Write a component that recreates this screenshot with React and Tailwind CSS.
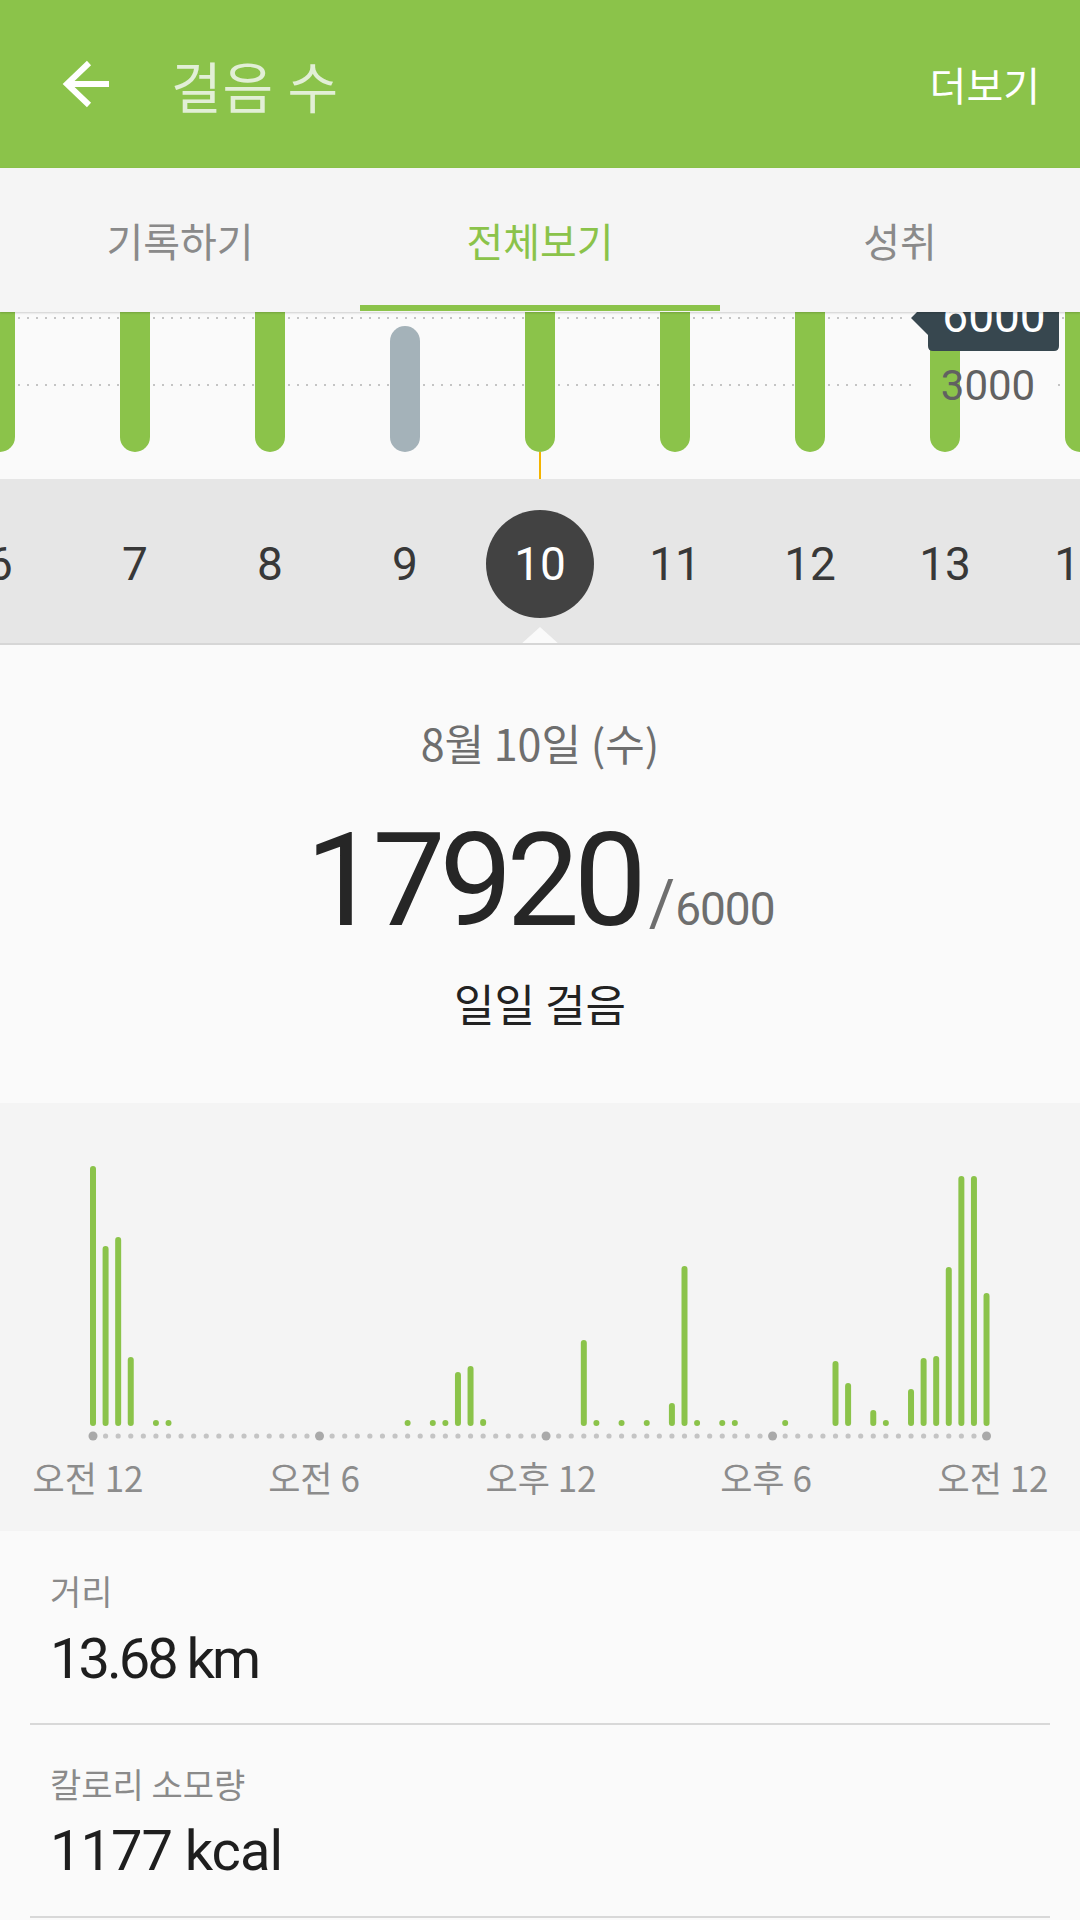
import React from "react";

const KR = "font-['Noto_Sans_CJK_KR','Noto_Sans',sans-serif]";
const NUM = "font-['Roboto','Noto_Sans_CJK_KR',sans-serif]";

const hourly = {
  0: 260, 1: 180, 2: 189, 3: 69, 5: 6, 6: 6, 25: 6, 27: 6, 28: 6, 29: 54, 30: 60, 31: 7,
  39: 86, 40: 6, 42: 6, 44: 6, 46: 23, 47: 160, 48: 6, 50: 6, 51: 6, 55: 6, 59: 65, 60: 43,
  62: 16, 63: 6, 65: 37, 66: 68, 67: 70, 68: 159, 69: 250, 70: 250, 71: 133,
};

function WeekChart() {
  const centers = [0, 135, 270, 405, 540, 675, 810, 945, 1080];
  return (
    <svg width="1080" height="167" viewBox="0 0 1080 167" className="block">
      <line x1="0" y1="6" x2="908" y2="6" stroke="#c4c4c4" strokeWidth="2" strokeDasharray="2 7" />
      <line x1="1062" y1="6" x2="1080" y2="6" stroke="#c4c4c4" strokeWidth="2" strokeDasharray="2 7" />
      <line x1="0" y1="73" x2="918" y2="73" stroke="#c4c4c4" strokeWidth="2" strokeDasharray="2 7" />
      <line x1="1058" y1="73" x2="1080" y2="73" stroke="#c4c4c4" strokeWidth="2" strokeDasharray="2 7" />
      {centers.map((c) =>
        c === 405 ? (
          <rect key={c} x={c - 15} y="14" width="30" height="126" rx="15" fill="#a4b2b9" />
        ) : (
          <rect key={c} x={c - 15} y="-30" width="30" height="170" rx="15" fill="#8bc34a" />
        )
      )}
      <line x1="540" y1="140" x2="540" y2="167" stroke="#f4b400" strokeWidth="2" />
      <path
        d="M933 -33 H1054 Q1059 -33 1059 -28 V34 Q1059 39 1054 39 H933 Q928 39 928 34 V23 L911 6 L928 -11 V-28 Q928 -33 933 -33 Z"
        fill="#37474f"
      />
      <text x="994" y="20" textAnchor="middle" fontSize="46" fill="#ffffff" fontFamily="Roboto, sans-serif">
        6000
      </text>
      <text x="988" y="88" textAnchor="middle" fontSize="42" fill="#616161" fontFamily="Roboto, sans-serif">
        3000
      </text>
    </svg>
  );
}

function HourlyChart() {
  const x0 = 93;
  const step = 12.585;
  const dots = Array.from({ length: 72 }, (_, i) => i);
  const big = [0, 18, 36, 54, 71];
  const labels = [
    { x: 88, t: "오전 12" },
    { x: 314, t: "오전 6" },
    { x: 541, t: "오후 12" },
    { x: 766, t: "오후 6" },
    { x: 993, t: "오전 12" },
  ];
  return (
    <svg width="1080" height="428" viewBox="0 0 1080 428" className="block">
      {Object.entries(hourly).map(([i, h]) => {
        const cx = x0 + Number(i) * step;
        return <rect key={i} x={cx - 3} y={323 - h} width="6" height={h} rx="3" fill="#8bc34a" />;
      })}
      {dots.map((i) =>
        big.includes(i) ? (
          <circle key={i} cx={x0 + i * step} cy="333" r="4.5" fill="#a9a9a9" />
        ) : (
          <circle key={i} cx={x0 + i * step} cy="333" r="2.6" fill="#c4c4c4" />
        )
      )}
      {labels.map((l) => (
        <text
          key={l.x}
          x={l.x}
          y="389"
          textAnchor="middle"
          fontSize="35"
          fill="#8c8c8c"
          fontFamily="'Noto Sans CJK KR', sans-serif"
        >
          {l.t}
        </text>
      ))}
    </svg>
  );
}

export default function App() {
  const days = [6, 7, 8, 9, 10, 11, 12, 13, 14];
  return (
    <div className={`w-[1080px] h-[1920px] overflow-hidden bg-[#fafafa] ${KR}`}>
      {/* Header */}
      <div className="h-[168px] bg-[#8bc34a] flex items-center">
        <svg width="48" height="48" viewBox="0 0 48 48" className="ml-[61px] shrink-0">
          <path d="M48 24 H6 M28 3 L6 24 L28 45" stroke="#ffffff" strokeWidth="6" fill="none" />
        </svg>
        <div className="ml-[62px] text-[55px] leading-none text-[#e2efd6] tracking-[1px]">걸음 수</div>
        <div className="ml-auto mr-[40px] text-[40px] leading-none text-white">더보기</div>
      </div>

      {/* Tabs */}
      <div className="relative z-10 h-[144px] bg-[#f5f5f5] grid grid-cols-3 shadow-[0_1px_2px_rgba(0,0,0,0.18)]">
        <div className="flex items-center justify-center text-[40px] leading-none text-[#8a8a8a]">기록하기</div>
        <div className="relative flex items-center justify-center text-[40px] leading-none text-[#8bc34a]">
          전체보기
          <div className="absolute left-0 right-0 bottom-[1px] h-[6px] bg-[#8bc34a]" />
        </div>
        <div className="flex items-center justify-center text-[40px] leading-none text-[#8a8a8a]">성취</div>
      </div>

      {/* Week chart */}
      <div className="h-[167px] bg-[#fafafa] overflow-hidden">
        <WeekChart />
      </div>

      {/* Day strip */}
      <div className="relative h-[166px] bg-[#e6e6e6] border-b-2 border-[#d6d6d6] overflow-hidden">
        <div className={`flex h-full pt-[5px] ml-[-67.5px] ${NUM}`}>
          {days.map((d) => (
            <div key={d} className="w-[135px] shrink-0 flex items-center justify-center">
              {d === 10 ? (
                <div className="w-[108px] h-[108px] rounded-full bg-[#424242] flex items-center justify-center text-[46px] leading-none text-white">
                  {d}
                </div>
              ) : (
                <span className="text-[46px] leading-none text-[#383838]">{d}</span>
              )}
            </div>
          ))}
        </div>
        <div className="absolute left-[520px] bottom-[-2px] w-0 h-0 border-x-[20px] border-x-transparent border-b-[18px] border-b-[#fafafa]" />
      </div>

      {/* Summary */}
      <div className="h-[458px] bg-[#fafafa] flex flex-col items-center">
        <div className="mt-[75px] h-[44px] text-[43px] leading-[44px] text-[#6e6e6e]">8월 10일 (수)</div>
        <div className={`mt-[52px] h-[130px] flex items-baseline ${NUM}`}>
          <span className="text-[130px] leading-none text-[#262626] tracking-[-6px]">17920</span>
          <span className="ml-[8px] text-[64px] leading-none text-[#6e6e6e]">/</span>
          <span className="text-[46px] leading-none text-[#6e6e6e] tracking-[-1px]">6000</span>
        </div>
        <div className="mt-[35px] h-[44px] text-[44px] leading-[44px] text-[#222222]">일일 걸음</div>
      </div>

      {/* Hourly chart */}
      <div className="h-[428px] bg-[#f4f4f4]">
        <HourlyChart />
      </div>

      {/* Stats */}
      <div className="bg-[#fafafa]">
        <div className="px-[50px] pt-[40px]">
          <div className="h-[40px] text-[34px] leading-[40px] text-[#8a8a8a]">거리</div>
          <div className={`mt-[20px] h-[56px] text-[56px] leading-none text-[#1e1e1e] tracking-[-3px] ${NUM}`}>
            13.68 km
          </div>
        </div>
        <div className="mx-[30px] mt-[36px] h-[2px] bg-[#d8d8d8]" />
        <div className="px-[50px] pt-[39px]">
          <div className="h-[40px] text-[34px] leading-[40px] text-[#8a8a8a]">칼로리 소모량</div>
          <div className={`mt-[19px] h-[56px] text-[56px] leading-none text-[#1e1e1e] tracking-[-1px] ${NUM}`}>
            1177 kcal
          </div>
        </div>
        <div className="mx-[30px] mt-[37px] h-[2px] bg-[#d8d8d8]" />
      </div>
    </div>
  );
}
